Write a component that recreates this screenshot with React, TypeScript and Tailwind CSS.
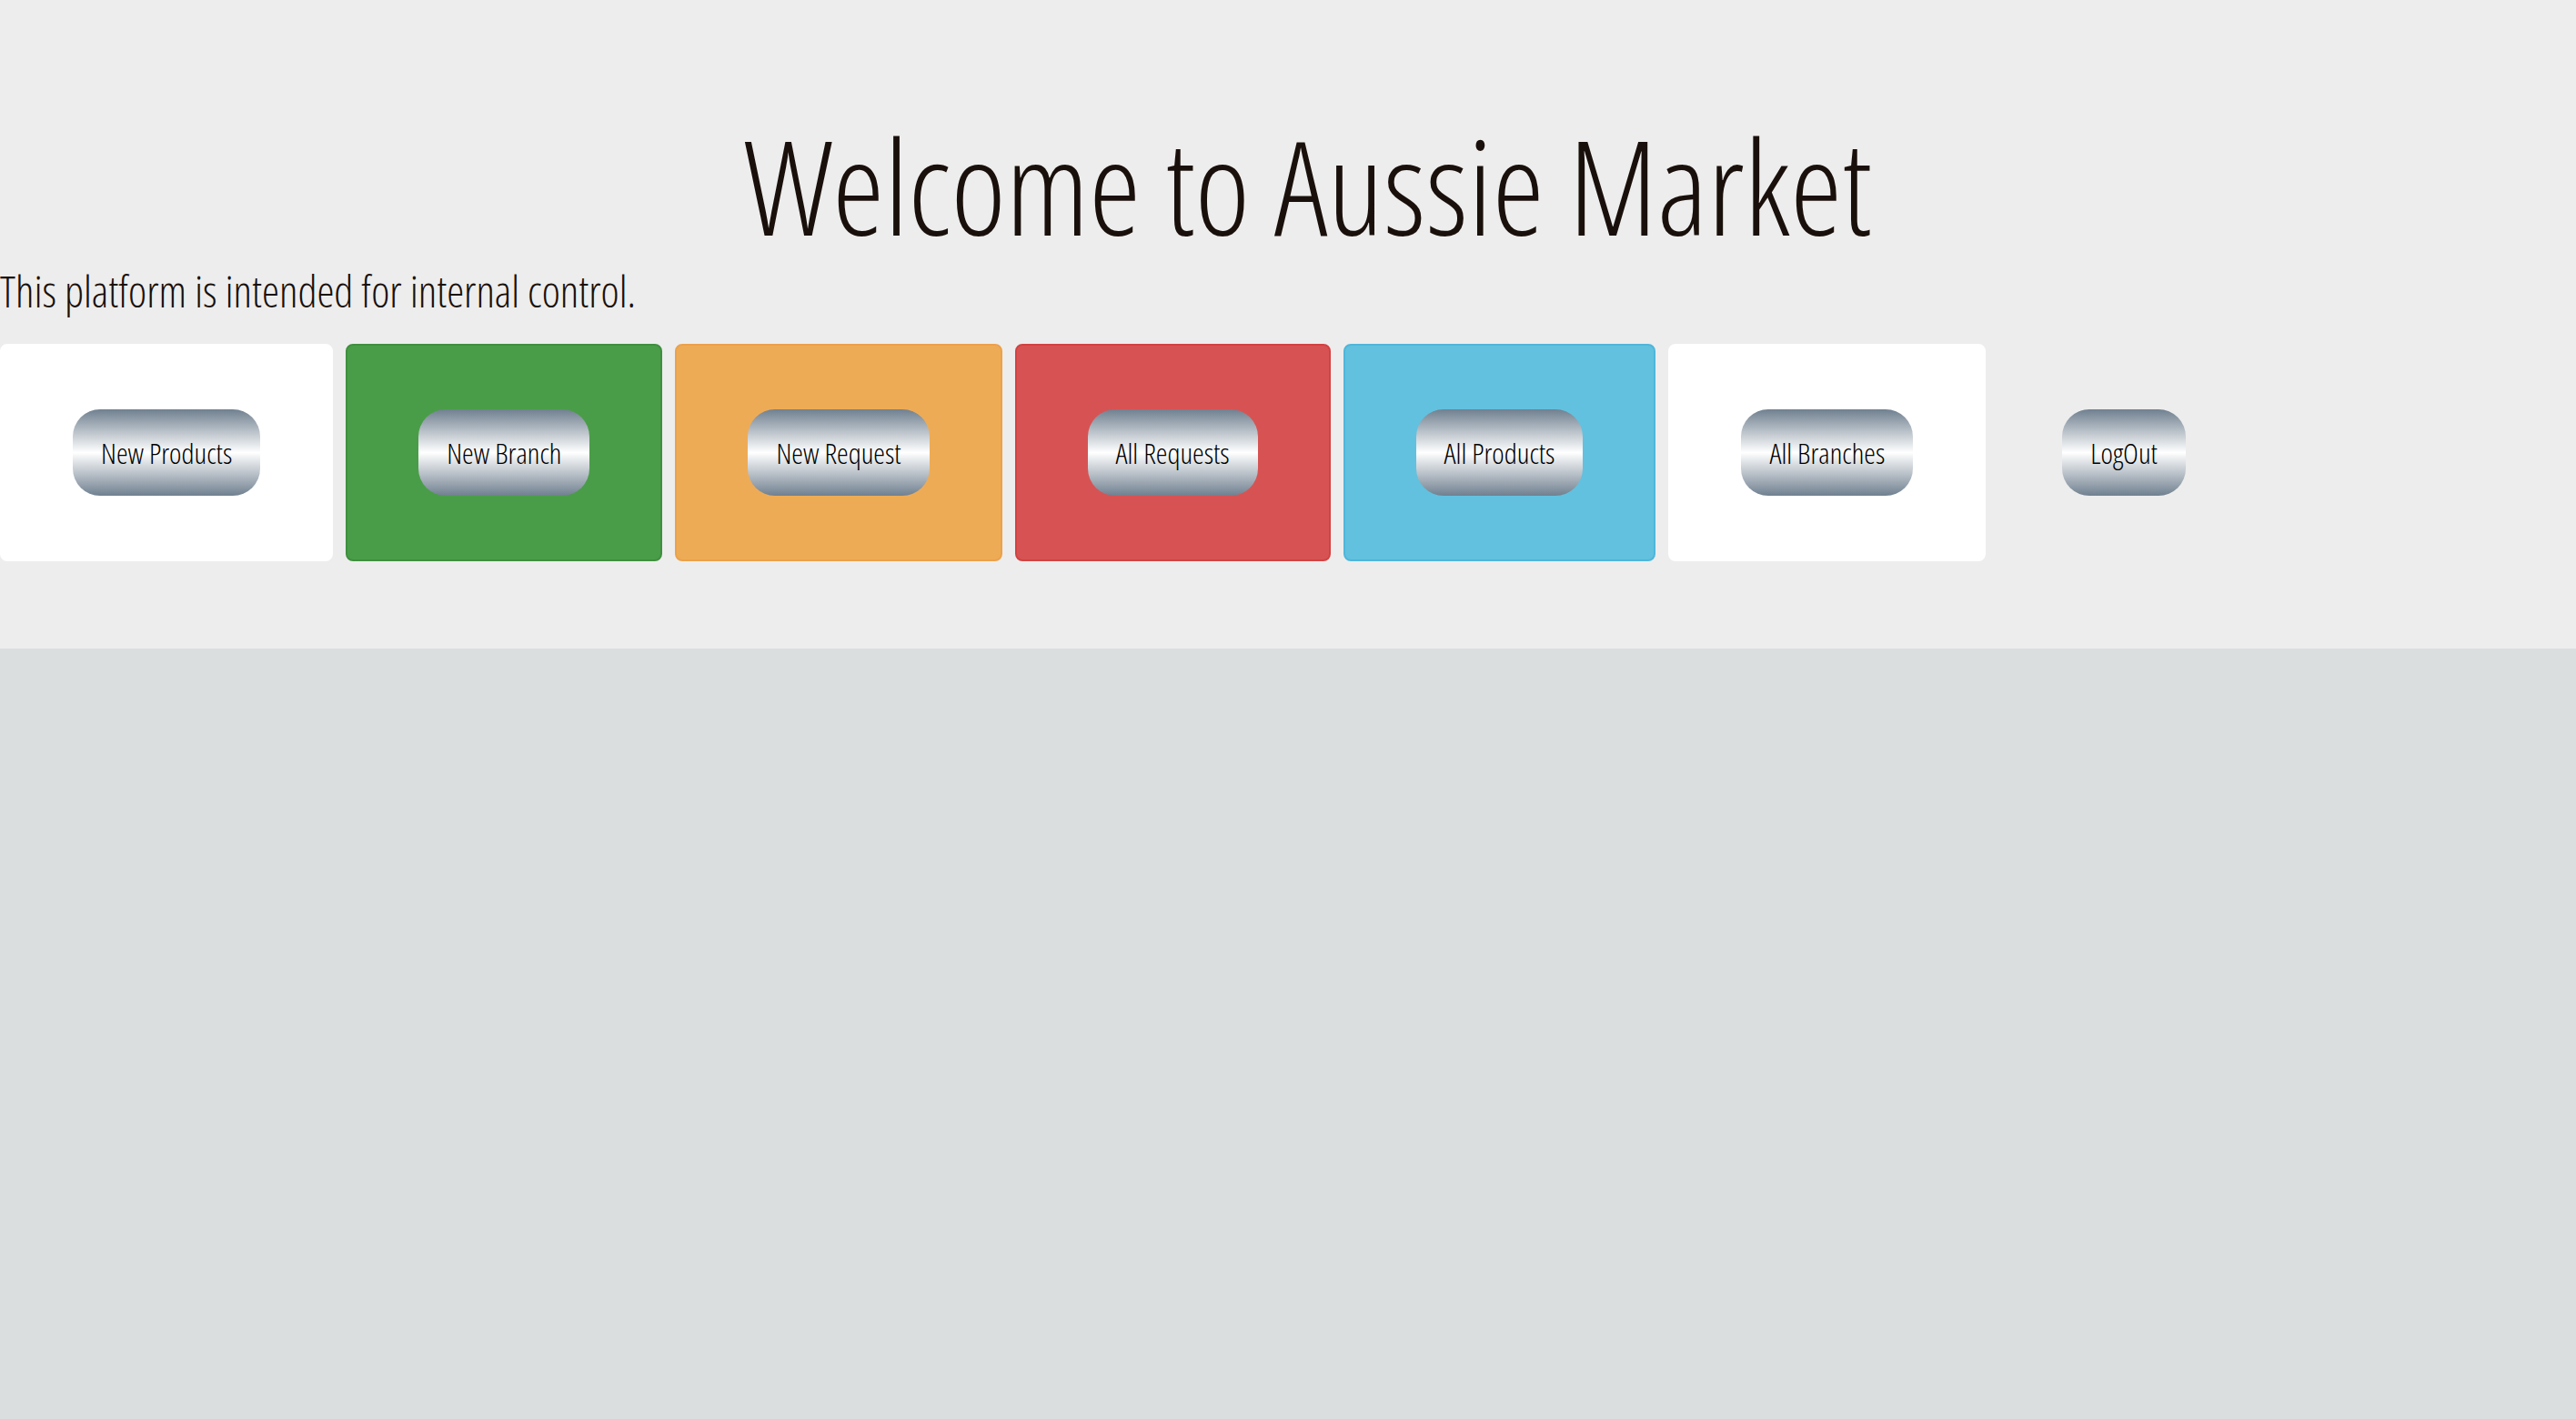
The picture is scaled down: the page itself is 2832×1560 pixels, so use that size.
const font = "font-['Open_Sans',sans-serif] font-light font-stretch-condensed";

type Tile = { label: string; card: string };

const tiles: Tile[] = [
  { label: "New Products", card: "bg-white border-white" },
  { label: "New Branch", card: "bg-[#4a9d48] border-[#3f8f3e]" },
  { label: "New Request", card: "bg-[#eeab56] border-[#eca14a]" },
  { label: "All Requests", card: "bg-[#d75353] border-[#d34242]" },
  { label: "All Products", card: "bg-[#62c1de] border-[#4fb6da]" },
  { label: "All Branches", card: "bg-white border-white" },
];

function MetalButton({ label }: { label: string }) {
  return (
    <button
      className={`rounded-[30px] bg-[linear-gradient(#708090,#ffffff,#708090)] px-[31px] py-[30px] text-[32px] leading-[35px] text-black ${font}`}
    >
      {label}
    </button>
  );
}

export default function App() {
  return (
    <div className={`min-h-screen bg-[#dadedf] ${font}`}>
      <section className="bg-[#ededed] pb-[96px] pt-[128px]">
        <h1 className="pl-[44px] text-center text-[144px] leading-[150px] text-[#1a100b]">
          Welcome to Aussie Market
        </h1>
        <p className="mt-[14px] text-[48px] leading-[56px] text-[#1a100b]">
          This platform is intended for internal control.
        </p>
        <div className="mt-[30px] flex items-stretch gap-[14px]">
          {tiles.map((t) => (
            <div
              key={t.label}
              className={`flex items-center justify-center rounded-[8px] border-2 px-[78px] py-[70px] ${t.card}`}
            >
              <MetalButton label={t.label} />
            </div>
          ))}
          <div className="flex items-center justify-center px-[70px] py-[70px]">
            <MetalButton label="LogOut" />
          </div>
        </div>
      </section>
    </div>
  );
}
